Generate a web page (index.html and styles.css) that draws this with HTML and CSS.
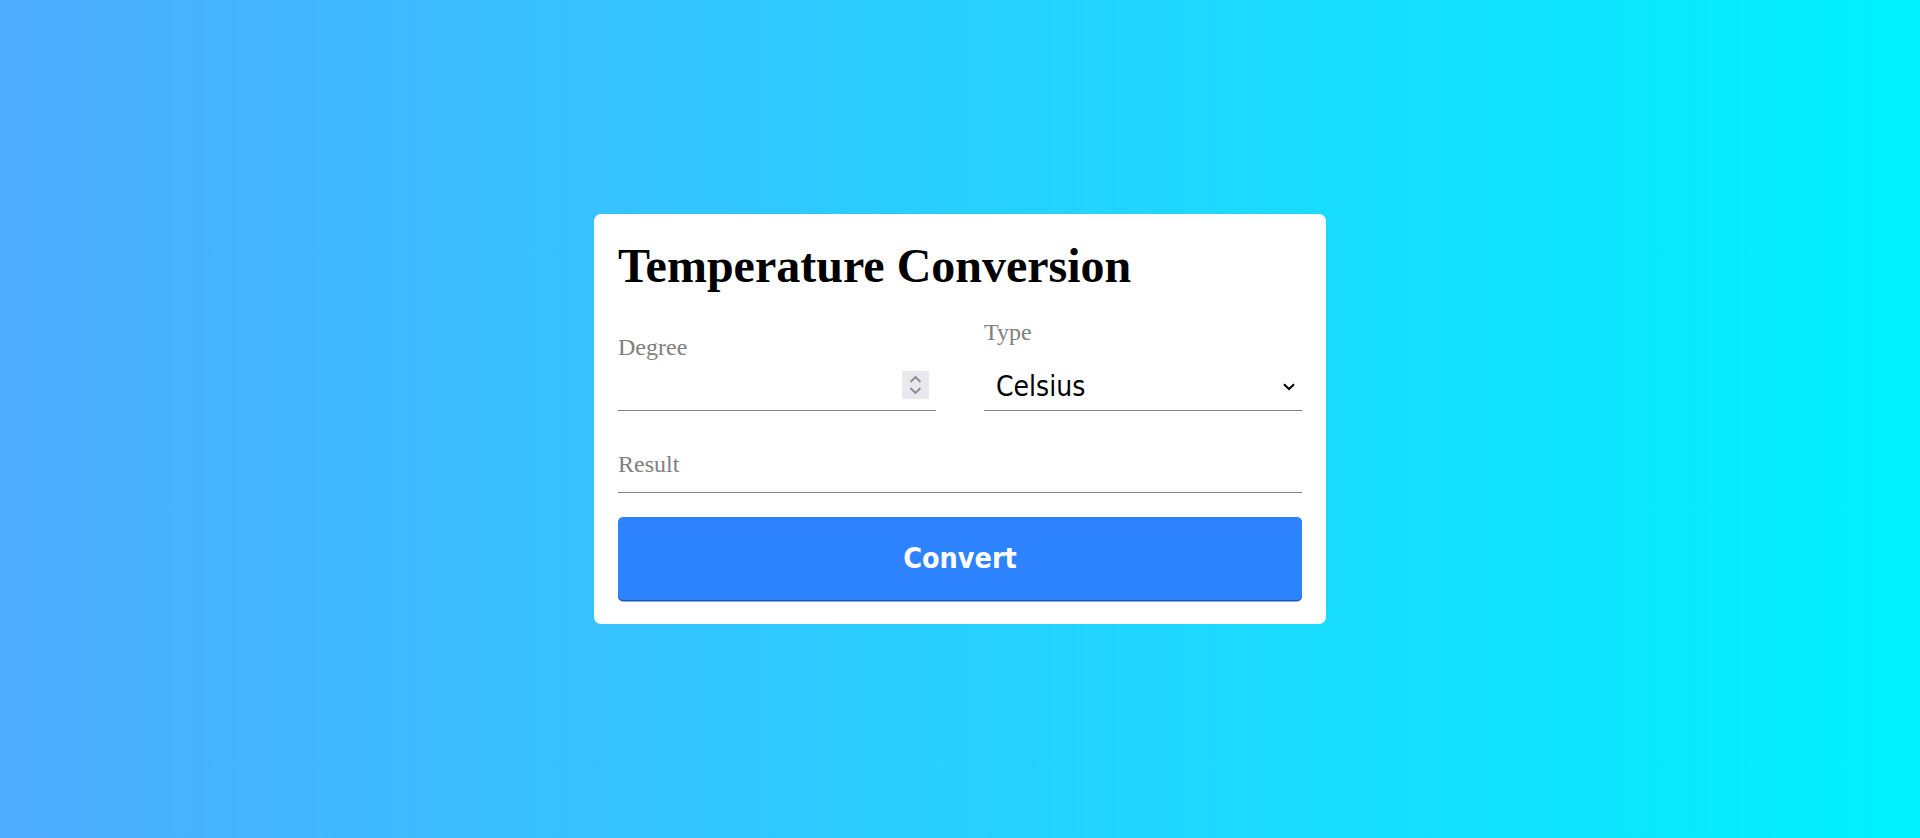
FILE: index.html
```html
<!DOCTYPE html>
<html lang="en">
<head>
<meta charset="utf-8">
<title>Temperature Conversion</title>
<link rel="stylesheet" href="styles.css">
</head>
<body>
<main class="card">
  <h1 class="title">Temperature Conversion</h1>
  <div class="row">
    <div class="field">
      <label class="label" for="degree">Degree</label>
      <div class="input-wrap">
        <input class="input" id="degree" type="text">
        <span class="spin" aria-hidden="true">
          <svg width="27" height="28" viewBox="0 0 27 28"><path d="M8.5 11 L13.5 6 L18.5 11" fill="none" stroke="#8a8a96" stroke-width="1.8"/><path d="M8.5 17 L13.5 22 L18.5 17" fill="none" stroke="#8a8a96" stroke-width="1.8"/></svg>
        </span>
      </div>
    </div>
    <div class="field">
      <label class="label" for="type">Type</label>
      <div class="select-wrap">
        <select class="select" id="type">
          <option>Celsius</option>
          <option>Fahrenheit</option>
          <option>Kelvin</option>
        </select>
        <svg class="chevron" width="12" height="8" viewBox="0 0 12 8" aria-hidden="true"><path d="M1 1.2 L6 6 L11 1.2" fill="none" stroke="#000" stroke-width="2"/></svg>
      </div>
    </div>
  </div>
  <input class="result" type="text" placeholder="Result" readonly>
  <button class="button" type="button">Convert</button>
</main>
</body>
</html>
```
FILE: styles.css
```css
* { box-sizing: border-box; }
html, body { margin: 0; padding: 0; }
body {
  min-height: 100vh;
  display: flex;
  align-items: center;
  justify-content: center;
  background: linear-gradient(to right, #4facfe 0%, #00f2fe 100%);
  font-family: "Liberation Serif", "Times New Roman", serif;
}
.card {
  width: 732px;
  background: #fff;
  border-radius: 7px;
  padding: 24px;
}
.title {
  margin: 0;
  font-size: 48px;
  line-height: 55px;
  font-weight: bold;
  color: #000;
}
.row {
  margin-top: 25px;
  display: grid;
  grid-template-columns: 1fr 1fr;
  column-gap: 48px;
  align-items: end;
}
.field {
  display: flex;
  flex-direction: column;
}
.label {
  display: block;
  font-size: 24px;
  line-height: 28px;
  color: #808080;
}
.input-wrap, .select-wrap {
  position: relative;
}
.input {
  display: block;
  width: 100%;
  height: 50px;
  border: 0;
  border-bottom: 1px solid #808080;
  outline: none;
  font: 24px "Liberation Serif", serif;
  background: transparent;
}
.spin {
  position: absolute;
  right: 7px;
  top: 10px;
  width: 27px;
  height: 28px;
  background: #e9e9ed;
  display: flex;
}
.select {
  display: block;
  width: 100%;
  height: 65px;
  padding: 16px 40px 0 12px;
  border: 0;
  border-bottom: 1px solid #808080;
  border-radius: 0;
  outline: none;
  appearance: none;
  -webkit-appearance: none;
  background: transparent;
  font-family: "DejaVu Sans Condensed", "DejaVu Sans", sans-serif;
  font-stretch: condensed;
  font-size: 28px;
  color: #000;
}
.chevron {
  position: absolute;
  right: 7px;
  top: 37px;
  pointer-events: none;
}
.result {
  display: block;
  width: 100%;
  height: 42px;
  margin-top: 40px;
  padding: 0 0 14px 0;
  border: 0;
  border-bottom: 1px solid #808080;
  outline: none;
  font: 24px/28px "Liberation Serif", serif;
  background: transparent;
}
.result::placeholder { color: #808080; opacity: 1; }
.button {
  display: block;
  width: 100%;
  height: 83px;
  margin-top: 24px;
  border: 0;
  border-radius: 5px;
  background: #2d83fe;
  box-shadow: 0 1.5px 0 #1d56b0;
  color: #fff;
  font-family: "DejaVu Sans Condensed", "DejaVu Sans", sans-serif;
  font-stretch: condensed;
  font-weight: bold;
  font-size: 28.5px;
  cursor: pointer;
}
```
